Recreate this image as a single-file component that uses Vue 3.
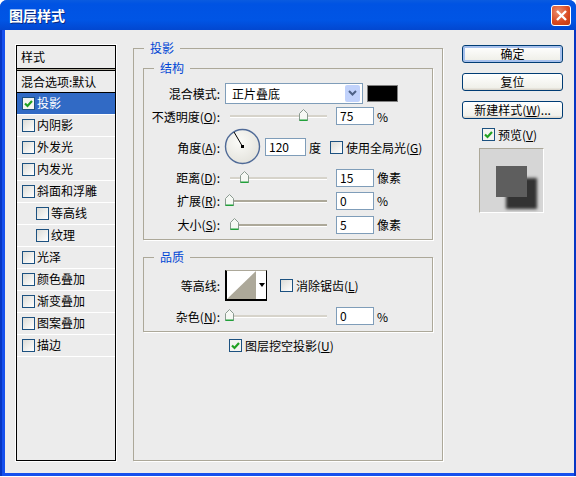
<template>
  <div class="window">
    <div class="titlebar">
      <span class="title">图层样式</span>
      <button class="close">
        <svg width="11" height="11" viewBox="0 0 11 11"><path d="M1 1l9 9M10 1l-9 9" stroke="#fff" stroke-width="2.4" /></svg>
      </button>
    </div>
    <div class="client">
      <div class="style-list">
        <div class="list-head">样式</div>
        <div class="list-blend">混合选项:默认</div>
        <div
          v-for="item in styles"
          :key="item.label"
          class="list-row"
          :class="{ active: item.active, sub: item.sub }"
        >
          <span class="check" :class="{ checked: item.active }">
            <svg v-if="item.active" width="11" height="11" viewBox="0 0 11 11"><path d="M2 5.5l2.5 2.5L9 3" fill="none" stroke="#21a121" stroke-width="2.2" /></svg>
          </span>
          <span class="row-text">{{ item.label }}</span>
        </div>
      </div>

      <fieldset class="group outer">
        <legend>投影</legend>

        <fieldset class="group structure">
          <legend>结构</legend>
          <div class="row blend-row">
            <label class="lbl">混合模式:</label>
            <div class="select">
              <span>正片叠底</span>
              <span class="arrow">
                <svg width="9" height="7" viewBox="0 0 9 7"><path d="M1 1l3.5 3.5L8 1" fill="none" stroke="#4d6185" stroke-width="2" /></svg>
              </span>
            </div>
            <span class="swatch"></span>
          </div>
          <div class="row opacity-row">
            <label class="lbl">不透明度(<u>O</u>):</label>
            <div class="slider light">
              <svg class="thumb" :style="{ left: '69px' }" width="9" height="12" viewBox="0 0 9 12"><path d="M.5 11.5V4.5l4-4 4 4v7z" fill="#f6f8f4" stroke="#8a9a90" /><path d="M.5 10.5h8v1.5h-8z" fill="#21a13a" /></svg>
            </div>
            <span class="num">75</span>
            <span class="unit">%</span>
          </div>
          <div class="row angle-row">
            <label class="lbl">角度(<u>A</u>):</label>
            <div class="dial">
              <svg width="38" height="38" viewBox="0 0 38 38">
                <defs>
                  <radialGradient id="dialFill" cx="0.4" cy="0.35" r="0.8">
                    <stop offset="0" stop-color="#fbfbf8" />
                    <stop offset="1" stop-color="#e0dfd8" />
                  </radialGradient>
                </defs>
                <circle cx="18.5" cy="18.5" r="17" fill="url(#dialFill)" stroke="#4f6a97" stroke-width="1.4" />
                <path d="M18.5 18.5L10 4" stroke="#000" stroke-width="1" />
                <rect x="17" y="17" width="3" height="3" fill="#000" />
              </svg>
            </div>
            <span class="num angle">120</span>
            <span class="unit">度</span>
            <span class="check global"></span>
            <span class="check-text">使用全局光(<u>G</u>)</span>
          </div>
          <div class="row dist-row">
            <label class="lbl">距离(<u>D</u>):</label>
            <div class="slider light">
              <svg class="thumb" :style="{ left: '10px' }" width="9" height="12" viewBox="0 0 9 12"><path d="M.5 11.5V4.5l4-4 4 4v7z" fill="#f6f8f4" stroke="#8a9a90" /><path d="M.5 10.5h8v1.5h-8z" fill="#21a13a" /></svg>
            </div>
            <span class="num">15</span>
            <span class="unit">像素</span>
          </div>
          <div class="row spread-row">
            <label class="lbl">扩展(<u>R</u>):</label>
            <div class="slider">
              <svg class="thumb" :style="{ left: '-5px' }" width="9" height="12" viewBox="0 0 9 12"><path d="M.5 11.5V4.5l4-4 4 4v7z" fill="#f6f8f4" stroke="#8a9a90" /><path d="M.5 10.5h8v1.5h-8z" fill="#21a13a" /></svg>
            </div>
            <span class="num">0</span>
            <span class="unit">%</span>
          </div>
          <div class="row size-row">
            <label class="lbl">大小(<u>S</u>):</label>
            <div class="slider">
              <svg class="thumb" :style="{ left: '0px' }" width="9" height="12" viewBox="0 0 9 12"><path d="M.5 11.5V4.5l4-4 4 4v7z" fill="#f6f8f4" stroke="#8a9a90" /><path d="M.5 10.5h8v1.5h-8z" fill="#21a13a" /></svg>
            </div>
            <span class="num">5</span>
            <span class="unit">像素</span>
          </div>
        </fieldset>

        <fieldset class="group quality">
          <legend>品质</legend>
          <div class="row contour-row">
            <label class="lbl">等高线:</label>
            <div class="contour">
              <svg width="29" height="28" viewBox="0 0 29 28"><path d="M0 28L29 0v28z" fill="#aca899" /></svg>
              <span class="contour-arrow"></span>
            </div>
            <span class="check aa"></span>
            <span class="check-text">消除锯齿(<u>L</u>)</span>
          </div>
          <div class="row noise-row">
            <label class="lbl">杂色(<u>N</u>):</label>
            <div class="slider light">
              <svg class="thumb" :style="{ left: '-5px' }" width="9" height="12" viewBox="0 0 9 12"><path d="M.5 11.5V4.5l4-4 4 4v7z" fill="#f6f8f4" stroke="#8a9a90" /><path d="M.5 10.5h8v1.5h-8z" fill="#21a13a" /></svg>
            </div>
            <span class="num">0</span>
            <span class="unit">%</span>
          </div>
        </fieldset>

        <div class="knockout">
          <span class="check checked">
            <svg width="11" height="11" viewBox="0 0 11 11"><path d="M2 5.5l2.5 2.5L9 3" fill="none" stroke="#21a121" stroke-width="2.2" /></svg>
          </span>
          <span class="check-text">图层挖空投影(<u>U</u>)</span>
        </div>
      </fieldset>

      <div class="side">
        <button class="btn primary">确定</button>
        <button class="btn">复位</button>
        <button class="btn">新建样式(<u>W</u>)...</button>
        <div class="preview-check">
          <span class="check checked">
            <svg width="11" height="11" viewBox="0 0 11 11"><path d="M2 5.5l2.5 2.5L9 3" fill="none" stroke="#21a121" stroke-width="2.2" /></svg>
          </span>
          <span class="check-text">预览(<u>V</u>)</span>
        </div>
        <div class="preview">
          <div class="preview-square"></div>
        </div>
      </div>
    </div>
  </div>
</template>

<script setup>
const styles = [
  { label: '投影', active: true },
  { label: '内阴影' },
  { label: '外发光' },
  { label: '内发光' },
  { label: '斜面和浮雕' },
  { label: '等高线', sub: true },
  { label: '纹理', sub: true },
  { label: '光泽' },
  { label: '颜色叠加' },
  { label: '渐变叠加' },
  { label: '图案叠加' },
  { label: '描边' }
]
</script>

<style>
html, body {
  margin: 0;
  background: #fff;
}
</style>

<style scoped>
.window {
  width: 576px;
  height: 476px;
  box-sizing: border-box;
  padding-left: 2px;
  border-radius: 7px 7px 0 0;
  background: linear-gradient(90deg, #0636c4 2px, #1550ee 2px, #1550ee 574px, #0636c4 574px);
  display: flex;
  flex-direction: column;
  font-family: "Noto Sans CJK SC", "Liberation Sans", sans-serif;
  font-size: 12px;
  color: #000;
  box-shadow: 0 1px 0 #555;
}

.titlebar {
  height: 30px;
  flex: none;
  margin-left: -2px;
  padding: 0 5px 0 9px;
  border-radius: 7px 7px 0 0;
  background: linear-gradient(#0a5be0 0, #0053e3 4px, #0055e5 20px, #0247d0 30px);
  display: flex;
  align-items: center;
  justify-content: space-between;
}

.title {
  color: #fff;
  font-size: 14px;
  font-weight: 700;
  text-shadow: 1px 1px 0 #0a2a80;
}

.close {
  width: 20px;
  height: 21px;
  padding: 0;
  border: 1px solid #fff;
  border-radius: 3px;
  background: radial-gradient(circle at 35% 30%, #ec8f70, #d9481f 60%, #c03a12);
  display: flex;
  align-items: center;
  justify-content: center;
}

.client {
  flex: 1;
  margin: 0 2px 3px 3px;
  padding: 15px 0 0 11px;
  background: #ececec;
  display: flex;
  align-items: flex-start;
}

.style-list {
  width: 100px;
  height: 416px;
  box-sizing: border-box;
  flex: none;
  border: 1px solid #000;
  outline: 1px solid #fff;
  outline-offset: 0;
}

.list-head {
  height: 22px;
  padding-left: 4px;
  line-height: 22px;
  border-bottom: 1px solid #000;
  box-shadow: 0 1px 0 #aca899;
}

.list-blend {
  height: 23px;
  margin-top: 1px;
  padding-left: 4px;
  line-height: 21px;
  border-top: 1px solid #000;
  border-bottom: 1px solid #000;
  box-sizing: border-box;
}

.list-row {
  height: 22px;
  box-sizing: border-box;
  padding-left: 5px;
  border-bottom: 1px solid #fff;
  display: flex;
  align-items: center;
  gap: 2px;
}

.row-text {
  padding-bottom: 3px;
}

.list-row.sub {
  padding-left: 19px;
}

.list-row.active {
  background: #316ac5;
  color: #fff;
}

.check {
  width: 11px;
  height: 11px;
  flex: none;
  border: 1px solid #1c5180;
  background: linear-gradient(135deg, #dcdcd7, #fff);
  display: inline-flex;
}

.check.checked {
  background: #f4f4f0;
}

.group {
  margin: 0;
  padding: 0;
  min-width: 0;
  border: 1px solid #aca899;
  box-shadow: 1px 1px 0 #fff;
  box-sizing: border-box;
}

.group legend {
  margin-left: 10px;
  padding: 0 6px;
  line-height: 14px;
  color: #0046d5;
}

.outer {
  width: 310px;
  height: 420px;
  margin: -4px 0 0 17px;
  padding: 0 9px;
  flex: none;
}

.outer > legend {
  margin-left: 1px;
}

.structure {
  height: 179px;
  margin-top: 6px;
}

.quality {
  height: 82px;
  margin-top: 10px;
}

.row {
  display: flex;
  align-items: center;
}

.lbl {
  width: 76px;
  flex: none;
  text-align: right;
  white-space: nowrap;
}

.blend-row {
  height: 22px;
  margin-top: 7px;
}

.select {
  width: 138px;
  height: 21px;
  box-sizing: border-box;
  margin-left: 5px;
  padding: 0 2px 0 6px;
  border: 1px solid #7f9db9;
  background: #fff;
  display: flex;
  align-items: center;
  justify-content: space-between;
}

.arrow {
  width: 15px;
  height: 17px;
  border-radius: 2px;
  background: #c1d2fb;
  display: flex;
  align-items: center;
  justify-content: center;
}

.swatch {
  width: 29px;
  height: 15px;
  margin-left: 4px;
  border: 1px solid #808080;
  background: #000;
}

.slider {
  position: relative;
  width: 97px;
  height: 2px;
  margin-left: 10px;
  background: #aca899;
  box-shadow: 0 1px 0 #fff;
}

.slider.light {
  background: #d6d3ca;
}

.thumb {
  position: absolute;
  top: -6px;
}

.num {
  width: 38px;
  height: 18px;
  box-sizing: border-box;
  margin-left: 9px;
  padding-left: 3px;
  border: 1px solid #7f9db9;
  background: #fff;
  line-height: 16px;
}

.unit {
  margin-left: 3px;
}

.opacity-row {
  height: 24px;
}

.angle-row {
  height: 38px;
}

.dial {
  width: 38px;
  height: 38px;
  margin-left: 4px;
}

.num.angle {
  width: 41px;
  margin-left: 3px;
}

.global {
  margin-left: 9px;
}

.aa {
  margin-left: 13px;
}

.check-text {
  margin-left: 3px;
  white-space: nowrap;
}

.dist-row {
  height: 23px;
}

.spread-row,
.size-row {
  height: 23px;
}

.size-row {
  margin-top: 1px;
}

.contour-row {
  height: 32px;
  margin-top: 5px;
}

.contour {
  width: 42px;
  height: 31px;
  box-sizing: border-box;
  margin-left: 5px;
  border: 1px solid #000;
  border-top-color: #aca899;
  border-left-width: 2px;
  border-bottom-width: 2px;
  background: #fff;
  display: flex;
}

.contour-arrow {
  flex: 1;
  position: relative;
}

.contour-arrow::after {
  content: '';
  position: absolute;
  left: 3px;
  top: 12px;
  border: 3px solid transparent;
  border-top: 4px solid #000;
  border-bottom: 0;
}

.noise-row {
  height: 24px;
  margin-top: 3px;
}

.knockout {
  margin: 5px 0 0 86px;
  display: flex;
  align-items: center;
}

.side {
  width: 101px;
  margin-left: 19px;
  flex: none;
  display: flex;
  flex-direction: column;
}

.btn {
  height: 18px;
  padding: 0;
  margin-bottom: 10px;
  border: 1px solid #003c74;
  border-radius: 3px;
  background: linear-gradient(#fff, #f0f0ea 85%, #d6d0c5);
  font: inherit;
  line-height: 14px;
  color: #000;
}

.btn.primary {
  box-shadow: inset 0 0 0 2px #a6c0ec;
}

.preview-check {
  margin: -2px 0 0 20px;
  height: 14px;
  display: flex;
  align-items: center;
}

.preview {
  width: 65px;
  height: 65px;
  margin: 7px 0 0 17px;
  box-sizing: border-box;
  border: 1px solid #aca899;
  border-right-color: #fff;
  border-bottom-color: #fff;
  background: #d6d6d6;
  padding: 17px 0 0 16px;
}

.preview-square {
  width: 31px;
  height: 31px;
  background: #5e5e5e;
  box-shadow: 10px 12px 3px #333;
}
</style>
